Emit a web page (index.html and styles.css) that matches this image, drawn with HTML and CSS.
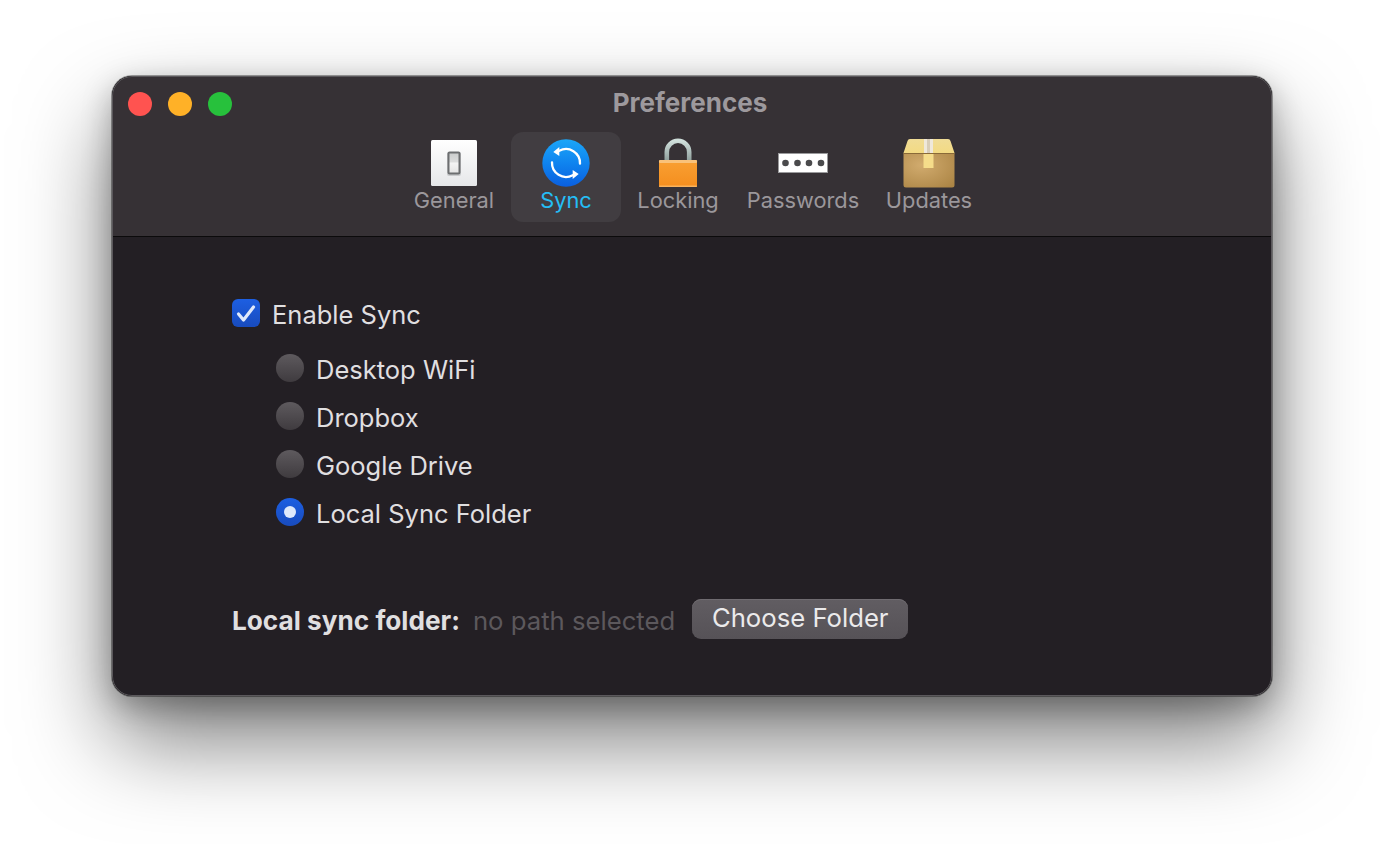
FILE: index.html
```html
<!DOCTYPE html>
<html lang="en">
<head>
<meta charset="utf-8">
<title>Preferences</title>
<link rel="stylesheet" href="styles.css">
</head>
<body>
<div class="window">
  <header class="titlebar">
    <div class="lights">
      <span class="light red"></span>
      <span class="light yellow"></span>
      <span class="light green"></span>
    </div>
    <div class="title">Preferences</div>
    <nav class="tabs">
      <div class="tab tab-general">
        <span class="icon">
          <svg width="46" height="46" viewBox="0 0 46 46">
            <defs>
              <linearGradient id="plate" x1="0" y1="0" x2="0" y2="1"><stop offset="0" stop-color="#ffffff"/><stop offset="1" stop-color="#e6e7e9"/></linearGradient>
              <linearGradient id="sw" x1="0" y1="0" x2="0" y2="1"><stop offset="0" stop-color="#c9cbcb"/><stop offset=".45" stop-color="#dcdddd"/><stop offset=".5" stop-color="#f4f4f4"/><stop offset="1" stop-color="#e3e3e3"/></linearGradient>
            </defs>
            <rect width="46" height="46" rx="1.5" fill="url(#plate)"/>
            <rect x="16" y="12" width="14" height="24" rx="2" fill="#c9cacc"/>
            <rect x="17.500" y="12.500" width="11" height="21" rx="1" fill="url(#sw)" stroke="#6c6e70" stroke-width="2"/>
          </svg>
        </span>
        <span class="label">General</span>
      </div>
      <div class="tab tab-sync active">
        <span class="icon">
          <svg width="48" height="48" viewBox="0 0 48 48">
            <defs>
              <linearGradient id="blue" x1="0" y1="0" x2="0" y2="1"><stop offset="0" stop-color="#1ba6f8"/><stop offset=".5" stop-color="#0f84ef"/><stop offset="1" stop-color="#0a5fdf"/></linearGradient>
            </defs>
            <circle cx="24" cy="24" r="23.700" fill="url(#blue)"/>
            <g fill="none" stroke="#fff" stroke-width="2.300" stroke-linecap="round">
              <path d="M17.300 11.800A14 14 0 0 1 38 24.700"/>
              <path d="M30.700 36.200A14 14 0 0 1 10 23.300"/>
            </g>
            <path d="M11.300 13L17.300 8V17Z" fill="#fff"/>
            <path d="M36.700 35L30.700 40V31Z" fill="#fff"/>
          </svg>
        </span>
        <span class="label">Sync</span>
      </div>
      <div class="tab tab-locking">
        <span class="icon">
          <svg width="40" height="50" viewBox="0 0 40 50">
            <defs>
              <linearGradient id="shackle" x1="0" y1="0" x2="0" y2="1"><stop offset="0" stop-color="#cfdfdb"/><stop offset="1" stop-color="#8b9b98"/></linearGradient>
              <linearGradient id="body" x1="0" y1="0" x2="0" y2="1"><stop offset="0" stop-color="#f9a033"/><stop offset="1" stop-color="#f48e1e"/></linearGradient>
            </defs>
            <path d="M8.800 24V14a11.200 11.200 0 0 1 22.400 0V24" fill="none" stroke="url(#shackle)" stroke-width="4.600"/>
            <rect x="1" y="22" width="38" height="27" rx="1.5" fill="url(#body)"/>
            <rect x="1" y="22" width="38" height="3" rx="1" fill="#f9c27a"/>
            <rect x="1" y="47.500" width="38" height="1.500" rx=".7" fill="#f9b25c"/>
          </svg>
        </span>
        <span class="label">Locking</span>
      </div>
      <div class="tab tab-passwords">
        <span class="icon">
          <svg width="50" height="20" viewBox="0 0 50 20">
            <rect x=".5" y=".5" width="49" height="19" fill="#fff" stroke="#9a9a9c"/>
            <g fill="#4a4a4c">
              <circle cx="7.500" cy="10" r="3.300"/>
              <circle cx="19.500" cy="10" r="3.300"/>
              <circle cx="31" cy="10" r="3.300"/>
              <circle cx="43" cy="10" r="3.300"/>
            </g>
          </svg>
        </span>
        <span class="label">Passwords</span>
      </div>
      <div class="tab tab-updates">
        <span class="icon">
          <svg width="52" height="50" viewBox="0 0 52 50">
            <defs>
              <linearGradient id="lid" x1="0" y1="0" x2="0" y2="1"><stop offset="0" stop-color="#f0dc96"/><stop offset="1" stop-color="#f3da83"/></linearGradient>
              <radialGradient id="box" cx=".35" cy=".35" r=".85"><stop offset="0" stop-color="#d1ab6e"/><stop offset="1" stop-color="#ac8545"/></radialGradient>
            </defs>
            <path d="M7 1H45Q47 1 47.500 3L51.500 15H.5L4.500 3Q5 1 7 1Z" fill="url(#lid)"/>
            <path d="M.5 15H51.500V47Q51.500 49.500 49 49.500H3Q.5 49.500 .5 47Z" fill="url(#box)"/>
            <rect x=".5" y="15" width="51" height="1" fill="#8a6a38"/>
            <rect x="21" y="1" width="9" height="14" fill="#efe8da"/>
            <rect x="24" y="1" width="3" height="14" fill="#d8cdb8"/>
            <rect x="20.500" y="16" width="10" height="14" fill="#f5dc8a"/>
          </svg>
        </span>
        <span class="label">Updates</span>
      </div>
    </nav>
  </header>
  <main class="content">
    <label class="row check-row">
      <span class="checkbox">
        <svg width="20" height="20" viewBox="0 0 20 20"><path d="M2.500 11L7.500 17L17.500 4" fill="none" stroke="#dfe9fb" stroke-width="3.200" stroke-linecap="round" stroke-linejoin="round"/></svg>
      </span>
      <span>Enable Sync</span>
    </label>
    <div class="radios">
      <label class="row"><span class="radio"></span><span>Desktop WiFi</span></label>
      <label class="row"><span class="radio"></span><span>Dropbox</span></label>
      <label class="row"><span class="radio"></span><span>Google Drive</span></label>
      <label class="row"><span class="radio on"></span><span>Local Sync Folder</span></label>
    </div>
    <div class="folder-row">
      <span class="folder-label">Local sync folder:</span>
      <span class="folder-path">no path selected</span>
      <button class="choose">Choose Folder</button>
    </div>
  </main>
</div>
</body>
</html>
```

FILE: styles.css
```css
* { box-sizing: border-box; }
html, body { margin: 0; height: 100%; }
body {
  background: #fff;
  padding: 76px 112px 0;
  overflow: hidden;
  font-family: Inter, "Liberation Sans", sans-serif;
}
.window {
  position: relative;
  width: 1160px;
  height: 620px;
  border-radius: 20px;
  background: #231f24;
  display: flex;
  flex-direction: column;
  overflow: hidden;
  box-shadow: 0 0 0 1px rgba(0,0,0,.35), 0 44px 90px rgba(0,0,0,.52), 0 10px 30px rgba(0,0,0,.28);
}
.window::after {
  content: "";
  position: absolute;
  inset: 0;
  border-radius: 20px;
  border: 1.500px solid #5b585c;
  box-shadow: 0 0 0 1px #111;
  pointer-events: none;
}
.titlebar {
  position: relative;
  height: 161px;
  flex: none;
  background: #363135;
  border-bottom: 1px solid #0b0a0b;
  padding-top: 56px;
}
.lights {
  position: absolute;
  left: 16px;
  top: 16px;
  display: flex;
  gap: 16px;
}
.light { width: 24px; height: 24px; border-radius: 50%; }
.red { background: #ff5350; }
.yellow { background: #ffb127; }
.green { background: #27c13c; }
.title {
  position: absolute;
  left: 0;
  right: 4px;
  top: 11px;
  text-align: center;
  font-size: 26px;
  line-height: 32px;
  font-weight: 700;
  color: #9d999d;
}
.tabs {
  display: flex;
  margin-left: 287px;
}
.tab {
  height: 90px;
  border-radius: 12px;
  display: flex;
  flex-direction: column;
  align-items: center;
  padding: 0 11px;
  color: #9b979b;
  font-size: 21.800px;
  width: 110px;
}
.tab-general { width: 110px; margin-right: 2px; }
.tab-sync { width: 110px; }
.tab-locking { width: 114px; }
.tab-passwords { width: 136px; }
.tab-updates { width: 116px; }
.icon {
  height: 50px;
  margin-top: 6px;
  margin-bottom: 1px;
  display: flex;
  align-items: center;
  justify-content: center;
}
.label { line-height: 28px; margin-top: -3px; white-space: nowrap; }
.tab.active { background: #413d41; }
.tab.active .label { color: #25bdf5; }
.content {
  flex: 1;
  padding: 61px 0 0 120px;
  color: #e0dfe0;
  font-size: 25.500px;
}
.row {
  display: flex;
  align-items: center;
  height: 48px;
  gap: 12px;
}
.check-row { height: 32px; }
.checkbox {
  width: 28px;
  height: 28px;
  margin-bottom: 2px;
  border-radius: 6px;
  background: linear-gradient(#1d5fe2, #184bbd);
  display: flex;
  align-items: center;
  justify-content: center;
}
.radios { margin: 15px 0 0 44px; }
.radio {
  width: 28px;
  height: 28px;
  margin-bottom: 2px;
  border-radius: 50%;
  background: linear-gradient(#5e5a5e, #3f3b3f);
  display: flex;
  align-items: center;
  justify-content: center;
}
.radio.on { background: linear-gradient(#1d5fe2, #184bbd); }
.radio.on::after {
  content: "";
  width: 12px;
  height: 12px;
  border-radius: 50%;
  background: #dfe9fb;
}
.folder-row {
  display: flex;
  align-items: center;
  margin-top: 62px;
  font-size: 25.700px;
}
.folder-label { font-weight: 700; font-size: 26.200px; }
.folder-path { color: #5c585c; margin-left: 13px; }
.choose {
  margin: 0 0 2px 17px;
  width: 216px;
  height: 40px;
  border: 0;
  border-radius: 9px;
  background: linear-gradient(#615d62, #565257);
  box-shadow: inset 0 1px 0 #6f6b70;
  color: #ebeaeb;
  font: 25.700px Inter, "Liberation Sans", sans-serif;
  padding: 0 0 4px;
}
```
